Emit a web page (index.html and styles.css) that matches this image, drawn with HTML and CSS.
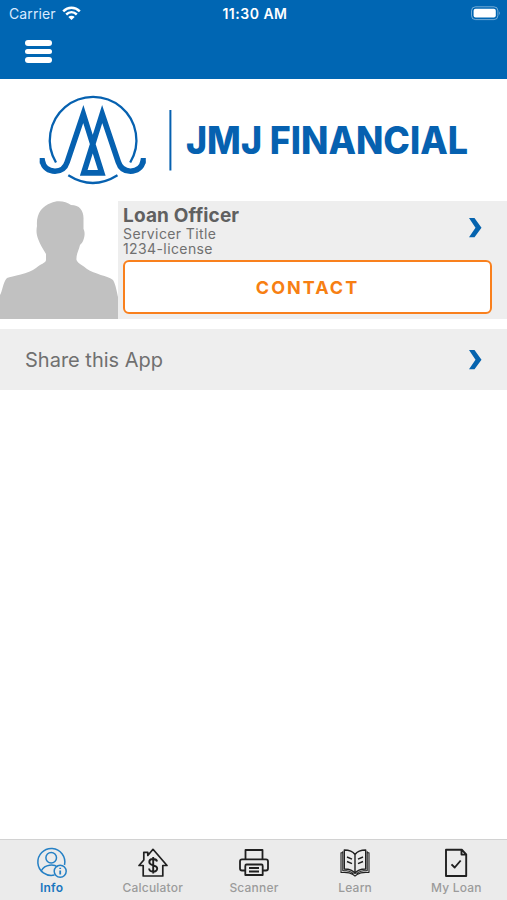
FILE: index.html
```html
<!DOCTYPE html>
<html lang="en">
<head>
  <meta charset="UTF-8">
  <meta name="viewport" content="width=device-width, initial-scale=1.0">
  <title>JMJ Financial</title>
  <link rel="stylesheet" href="styles.css">
</head>
<body>
  <header class="header">
    <div class="status-bar">
      <div class="carrier">
        <span>Carrier</span>
        <svg width="19" height="15" viewBox="0 0 19 15" fill="none" stroke="#fff" stroke-width="2.5">
          <path d="M1.2 5.3C6 .6 13 .6 17.800 5.300"/>
          <path d="M4.200 8.500C7.300 5.600 11.700 5.600 14.800 8.500"/>
          <path d="M9.500 14L6.300 10.900C8 9.300 11 9.300 12.700 10.900Z" fill="#fff" stroke="none"/>
        </svg>
      </div>
      <span class="time">11:30 AM</span>
      <svg class="battery" width="31" height="15" viewBox="0 0 31 15">
        <rect x="1.500" y=".8" width="26.400" height="12.800" rx="4" fill="none" stroke="#fff" stroke-opacity=".45"/>
        <rect x="3.600" y="2.800" width="22.200" height="8.800" rx="2" fill="#fff"/>
        <path d="M29.200 5.200Q31 7.200 29.200 9.300Z" fill="#fff" fill-opacity=".5"/>
      </svg>
    </div>
    <button class="menu-btn" aria-label="Menu"><span></span><span></span><span></span></button>
  </header>

  <main>
    <div class="logo">
      <svg width="507" height="122" viewBox="0 79 507 122">
        <g fill="none" stroke="#0661b0">
          <path stroke-width="2.300" d="M56 162.500A43.300 43.300 0 1 1 130.200 162.500M68.300 175.300Q92.800 190.700 117.500 175.300"/>
          <path stroke-width="5.600" stroke-miterlimit="6" d="M39.700 160.800H42.300C43.500 167.800 49 171.200 55 171.200C61.500 171.200 65.300 168 67.200 162L83.300 114L101.800 172.900H83.700L102.200 114L118.300 162C120.200 168 124 171.200 130.500 171.200C136.500 171.200 142 167.800 143.200 160.800H145.800"/>
          <path stroke-width="2" d="M170.400 110V170.500"/>
        </g>
        <text x="186" y="153.900" textLength="282" lengthAdjust="spacingAndGlyphs">JMJ FINANCIAL</text>
      </svg>
    </div>

    <section class="officer">
      <svg class="photo" width="118" height="118" viewBox="0 201 118 118">
        <path fill="#c1c1c1" d="M0 319V295C2 293 3 282 7 278C12 276 29 274 36 268C40 264 46 263 46 260V254C43 249 40 244 38.500 240C36.500 235 36 231 37 226C36 214 42 206 51 203C57 200 66 201 71 205C80 205 84 211 83.500 220V229C86 233 84 242 80 245C79 250 76 254 76.500 260C78 264 83 265 87 269C94 274 108 276 113 280C116 285 117 293 118 297V319Z"/>
      </svg>
      <div class="officer-info">
        <div class="officer-name">Loan Officer</div>
        <div class="officer-detail">Servicer Title</div>
        <div class="officer-detail">1234-license</div>
        <button class="contact-btn">CONTACT</button>
        <svg class="arrow officer-arrow" width="13" height="20" viewBox="0 0 13 20"><path d="M0 0H5.500L12.500 9.700L5.500 19.200H0L6.500 9.700Z"/></svg>
      </div>
    </section>

    <a class="share">
      <span>Share this App</span>
      <svg class="arrow" width="13" height="20" viewBox="0 0 13 20"><path d="M0 0H5.500L12.500 9.700L5.500 19.200H0L6.500 9.700Z"/></svg>
    </a>
  </main>

  <nav class="tabs">
    <a class="tab active">
      <svg width="32" height="32" viewBox="0 0 32 32">
        <path d="M18.500 28.100A13.500 13.500 0 1 1 28.500 18M5.500 23.500C9 17 18 17 21.500 20"/>
        <circle cx="15.200" cy="10.800" r="5.300"/>
        <circle cx="24.200" cy="24.200" r="6"/>
        <path stroke-width="1.800" d="M24.200 20.700V22M24.200 23.500V27.500"/>
      </svg>
      <span>Info</span>
    </a>
    <a class="tab">
      <svg width="32" height="32" viewBox="0 0 32 32">
        <path stroke-width="1.700" d="M6.200 29V18.500H2L6.800 13V5.300H10.800V8.500L16 2.300L30 18.500H25.800V29Z"/>
        <path stroke-width="1.900" d="M20 14.500C19.500 11.300 12.300 11 12.300 15C12.300 19.500 20.200 17.300 20.200 21.500C20.200 25.800 12.500 25.500 12.100 21.500M16.200 10V26.500"/>
      </svg>
      <span>Calculator</span>
    </a>
    <a class="tab">
      <svg width="32" height="32" viewBox="0 0 32 32">
        <path stroke-width="1.800" d="M7.500 12V3H24.500V12M7.300 23.500H4Q2 23.500 2 21.500V14.500Q2 12.300 4 12.300H28Q30 12.300 30 14.500V21.500Q30 23.500 28 23.500H24.700M8.500 17.500H23.500Q24.700 17.500 24.700 19V28H7.300V19Q7.300 17.500 8.500 17.500ZM11 21H21M11 24.500H21"/>
      </svg>
      <span>Scanner</span>
    </a>
    <a class="tab">
      <svg width="32" height="32" viewBox="0 0 32 32">
        <path stroke-width="1.400" d="M16 7.500C13.500 4 8.500 3 5.300 3V22C9 22 13.500 22.500 16 26.500C18.500 22.500 23 22 26.700 22V3C23.500 3 18.500 4 16 7.500V26M8 10L13 12.200M8 14.500L13 16.700M24 10L19 12.200M24 14.500L19 16.700"/>
        <path stroke-width="1.100" d="M3.800 4.200V23.500C8 23.500 12.500 24.500 14.500 27M28.200 4.200V23.500C24 23.500 19.500 24.500 17.500 27M3.300 5.800H2V25.500C7 25 11 25.500 14 27.500L16 29.200L18 27.500C21 25.500 25 25 30 25.500V5.800H28.700"/>
      </svg>
      <span>Learn</span>
    </a>
    <a class="tab">
      <svg width="32" height="32" viewBox="0 0 32 32">
        <path stroke-width="1.900" d="M6 2.700H21.800L26.200 7.500V29H6ZM21.500 3V7.600H26M11.500 17.300L14.700 20.500L20.700 13.500"/>
      </svg>
      <span>My Loan</span>
    </a>
  </nav>
</body>
</html>
```

FILE: styles.css
```css
* {
  box-sizing: border-box;
}

body {
  margin: 0;
  font-family: Inter, Roboto, sans-serif;
  background: #fff;
  color: #707070;
  display: flex;
  flex-direction: column;
  height: 100vh;
}

svg {
  display: block;
  flex-shrink: 0;
}

button {
  font-family: inherit;
  border: none;
  cursor: pointer;
}

.header {
  height: 79px;
  background: #0066b3;
  color: #fff;
}

.status-bar {
  height: 27px;
  padding: 0 6px 0 9px;
  display: grid;
  grid-template-columns: 1fr auto 1fr;
  align-items: center;
  font-size: 14px;
}

.carrier {
  display: flex;
  align-items: center;
  gap: 6px;
  color: #d9eaff;
  letter-spacing: 0.1px;
}

.time {
  font-size: 14px;
  font-weight: 600;
  letter-spacing: 0.5px;
}

.battery {
  justify-self: end;
}

.menu-btn {
  background: none;
  padding: 0;
  margin: 13px 0 0 25px;
  display: flex;
  flex-direction: column;
  gap: 3px;
}

.menu-btn span {
  width: 27px;
  height: 5.5px;
  border-radius: 3px;
  background: #fff;
}

main {
  flex: 1;
}

.logo {
  height: 122px;
}

.logo text {
  font-family: Inter, sans-serif;
  font-size: 38px;
  font-weight: 800;
  fill: #0661b0;
}

.officer {
  display: flex;
  height: 118px;
}

.officer-info {
  position: relative;
  flex: 1;
  background: #eee;
  padding: 5px 15px 5px 5px;
}

.officer-name {
  font-size: 19px;
  line-height: 20px;
  font-weight: 700;
  letter-spacing: 0.15px;
  color: #606060;
}

.officer-detail {
  font-size: 14px;
  line-height: 15px;
  letter-spacing: 0.4px;
}

.contact-btn {
  display: block;
  width: 369px;
  height: 54px;
  margin-top: 4px;
  border: 2px solid #f9801d;
  border-radius: 6px;
  background: #fff;
  color: #f77f13;
  font-size: 18px;
  font-weight: 700;
  letter-spacing: 2px;
}

.arrow {
  fill: #0563ae;
}

.officer-arrow {
  position: absolute;
  top: 17px;
  right: 25px;
}

.share {
  display: flex;
  align-items: center;
  justify-content: space-between;
  height: 61px;
  margin-top: 10px;
  padding: 0 25px;
  background: #eee;
  font-size: 20px;
}

.tabs {
  display: grid;
  grid-template-columns: repeat(5, 101.2px);
  height: 61px;
  padding: 7px 0 0 1px;
  border-top: 1px solid #d2d2d2;
  background: #ebebeb;
}

.tab {
  display: flex;
  flex-direction: column;
  align-items: center;
  color: #9b9b9b;
  font-size: 12px;
  font-weight: 500;
  line-height: 17px;
  letter-spacing: 0.2px;
}

.tab svg {
  fill: none;
  stroke: #202020;
  stroke-width: 1.5;
  stroke-linejoin: round;
}

.tab.active {
  color: #1976bf;
  font-weight: 600;
}

.tab.active svg {
  stroke: #2580c5;
}
```
